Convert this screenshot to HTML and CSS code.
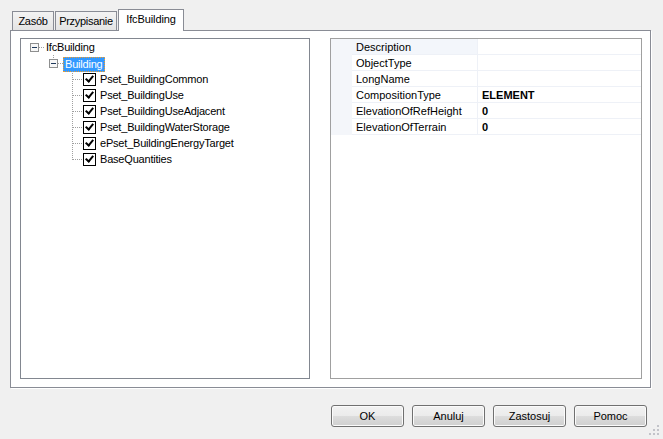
FILE: index.html
```html
<!DOCTYPE html>
<html lang="pl">
  <head>
    <meta charset="UTF-8" />
    <title>IfcBuilding</title>
    <link rel="stylesheet" href="styles.css">
  </head>
  <body>
    <div class="dialog">
      <div class="tabs">
        <div class="tab tab-zasob">Zasób</div>
        <div class="tab tab-przypisanie">Przypisanie</div>
        <div class="tab tab-active">IfcBuilding</div>
      </div>

      <div class="tab-panel">
        <div class="tree">
          <div class="node">
            <svg class="lines" width="23" height="16">
              <rect x="9.5" y="4.5" width="8" height="8" class="exp-box" />
              <line x1="11" y1="8.5" x2="16" y2="8.5" class="exp-sign" />
              <line x1="18" y1="8.5" x2="23" y2="8.5" class="dots" />
            </svg>
            <span class="label">IfcBuilding</span>
          </div>
          <div class="node">
            <svg class="lines" width="42" height="16">
              <line x1="32.5" y1="0" x2="32.5" y2="4" class="dots" />
              <rect x="28.5" y="4.5" width="8" height="8" class="exp-box" />
              <line x1="30" y1="8.5" x2="35" y2="8.5" class="exp-sign" />
              <line x1="37" y1="8.5" x2="42" y2="8.5" class="dots" />
            </svg>
            <span class="label label-selected">Building</span>
          </div>
          <div class="node">
            <svg class="lines" width="62" height="16">
              <line x1="51.5" y1="0" x2="51.5" y2="16" class="dots" />
              <line x1="52" y1="8.5" x2="62" y2="8.5" class="dots" />
            </svg>
            <span class="check"></span>
            <span class="label">Pset_BuildingCommon</span>
          </div>
          <div class="node">
            <svg class="lines" width="62" height="16">
              <line x1="51.5" y1="0" x2="51.5" y2="16" class="dots" />
              <line x1="52" y1="8.5" x2="62" y2="8.5" class="dots" />
            </svg>
            <span class="check"></span>
            <span class="label">Pset_BuildingUse</span>
          </div>
          <div class="node">
            <svg class="lines" width="62" height="16">
              <line x1="51.5" y1="0" x2="51.5" y2="16" class="dots" />
              <line x1="52" y1="8.5" x2="62" y2="8.5" class="dots" />
            </svg>
            <span class="check"></span>
            <span class="label">Pset_BuildingUseAdjacent</span>
          </div>
          <div class="node">
            <svg class="lines" width="62" height="16">
              <line x1="51.5" y1="0" x2="51.5" y2="16" class="dots" />
              <line x1="52" y1="8.5" x2="62" y2="8.5" class="dots" />
            </svg>
            <span class="check"></span>
            <span class="label">Pset_BuildingWaterStorage</span>
          </div>
          <div class="node">
            <svg class="lines" width="62" height="16">
              <line x1="51.5" y1="0" x2="51.5" y2="16" class="dots" />
              <line x1="52" y1="8.5" x2="62" y2="8.5" class="dots" />
            </svg>
            <span class="check"></span>
            <span class="label">ePset_BuildingEnergyTarget</span>
          </div>
          <div class="node">
            <svg class="lines" width="62" height="16">
              <line x1="51.5" y1="0" x2="51.5" y2="9" class="dots" />
              <line x1="52" y1="8.5" x2="62" y2="8.5" class="dots" />
            </svg>
            <span class="check"></span>
            <span class="label">BaseQuantities</span>
          </div>
        </div>

        <div class="props">
          <div class="prop">
            <div class="prop-margin"></div>
            <div class="prop-name prop-name-current">Description</div>
            <div class="prop-value"></div>
          </div>
          <div class="prop">
            <div class="prop-margin"></div>
            <div class="prop-name">ObjectType</div>
            <div class="prop-value"></div>
          </div>
          <div class="prop">
            <div class="prop-margin"></div>
            <div class="prop-name">LongName</div>
            <div class="prop-value"></div>
          </div>
          <div class="prop">
            <div class="prop-margin"></div>
            <div class="prop-name">CompositionType</div>
            <div class="prop-value">ELEMENT</div>
          </div>
          <div class="prop">
            <div class="prop-margin"></div>
            <div class="prop-name">ElevationOfRefHeight</div>
            <div class="prop-value">0</div>
          </div>
          <div class="prop">
            <div class="prop-margin"></div>
            <div class="prop-name">ElevationOfTerrain</div>
            <div class="prop-value">0</div>
          </div>
        </div>
      </div>

      <div class="buttons">
        <button class="btn">OK</button>
        <button class="btn">Anuluj</button>
        <button class="btn">Zastosuj</button>
        <button class="btn">Pomoc</button>
      </div>

      <svg class="grip" width="11" height="11">
        <rect x="8" y="0" width="2" height="2" class="grip-dot" />
        <rect x="8" y="4" width="2" height="2" class="grip-dot" />
        <rect x="4" y="4" width="2" height="2" class="grip-dot" />
        <rect x="8" y="8" width="2" height="2" class="grip-dot" />
        <rect x="4" y="8" width="2" height="2" class="grip-dot" />
        <rect x="0" y="8" width="2" height="2" class="grip-dot" />
      </svg>
    </div>
  </body>
</html>
```

FILE: styles.css
```css
body {
  margin: 0;
  padding: 0;
  background: #f0f0f0;
  font-family: "Liberation Sans", Arial, sans-serif;
  font-size: 11px;
  color: #000;
}

.dialog {
  position: relative;
  width: 663px;
  height: 439px;
  overflow: hidden;
}

/* tabs */
.tabs {
  display: flex;
  align-items: flex-end;
  height: 21px;
  margin-top: 9px;
  padding-left: 12px;
}

.tab {
  box-sizing: border-box;
  height: 19px;
  margin-right: 1px;
  border: 1px solid #898c95;
  border-bottom: none;
  background: linear-gradient(#f3f3f3, #e4e4e4);
  line-height: 18px;
  text-align: center;
  letter-spacing: -0.3px;
  white-space: nowrap;
}

.tab-zasob {
  width: 42px;
}

.tab-przypisanie {
  width: 62px;
}

.tab-active {
  position: relative;
  z-index: 1;
  width: 66px;
  height: 22px;
  margin-bottom: -1px;
  margin-right: 0;
  background: #fff;
  line-height: 19px;
  letter-spacing: -0.1px;
}

.tab-panel {
  box-sizing: border-box;
  display: flex;
  gap: 20px;
  width: 641px;
  height: 358px;
  margin-left: 10px;
  padding: 7px 8px 8px 9px;
  border: 1px solid #898c95;
  background: #fff;
  box-shadow: 1px 1px 0 #fff;
}

/* tree */
.tree {
  box-sizing: border-box;
  width: 290px;
  border: 1px solid #828790;
  background: #fff;
}

.node {
  display: flex;
  align-items: center;
  height: 16px;
}

.lines {
  display: block;
  flex: none;
}

.dots {
  stroke: #a0a0a0;
  stroke-width: 1;
  stroke-dasharray: 1 1;
}

.exp-box {
  fill: #f7f7f7;
  stroke: #8e8f8f;
}

.exp-sign {
  stroke: #1e395b;
  stroke-width: 1;
}

.label {
  padding: 0 2px;
  line-height: 15px;
  letter-spacing: -0.2px;
  white-space: nowrap;
}

.label-selected {
  margin-top: 2px;
  background: #3399ff;
  color: #fff;
  outline: 1px dotted #f29d2b;
  outline-offset: -1px;
}

.check {
  position: relative;
  box-sizing: border-box;
  width: 13px;
  height: 13px;
  margin: 1px 2px 0 0;
  border: 1px solid #000;
  background: #fff;
  flex: none;
}

.check::after {
  content: "";
  position: absolute;
  left: 3px;
  top: 0px;
  width: 3px;
  height: 6px;
  border: solid #000;
  border-width: 0 2px 2px 0;
  transform: rotate(40deg);
}

/* property grid */
.props {
  box-sizing: border-box;
  width: 312px;
  border: 1px solid #a0a0a0;
  background: #fff;
}

.prop {
  display: grid;
  grid-template-columns: 21px 125px 1fr;
  height: 16px;
}

.prop-margin {
  background: #f4f6fa;
}

.prop-name {
  padding: 1px 0 0 4px;
  line-height: 14px;
  border-bottom: 1px solid #eef1f7;
  white-space: nowrap;
}

.prop-name-current {
  background: #f3f6fb;
}

.prop-value {
  padding: 1px 0 0 4px;
  line-height: 14px;
  font-weight: bold;
  border-left: 1px solid #eef1f7;
  border-bottom: 1px solid #eef1f7;
}

/* buttons */
.buttons {
  display: flex;
  justify-content: flex-end;
  gap: 8px;
  margin-top: 17px;
  padding-right: 16px;
}

.btn {
  box-sizing: border-box;
  width: 73px;
  height: 22px;
  padding: 0;
  border: 1px solid #707070;
  border-radius: 3px;
  background: linear-gradient(#f2f2f2 0%, #ebebeb 50%, #dddddd 50%, #cfcfcf 100%);
  box-shadow: inset 0 0 0 1px #fbfbfb;
  font-family: "Liberation Sans", Arial, sans-serif;
  font-size: 11px;
  font-weight: normal;
  color: #000;
}

.grip {
  position: absolute;
  right: 3px;
  bottom: 3px;
}

.grip-dot {
  fill: #c2c3c9;
}
```
